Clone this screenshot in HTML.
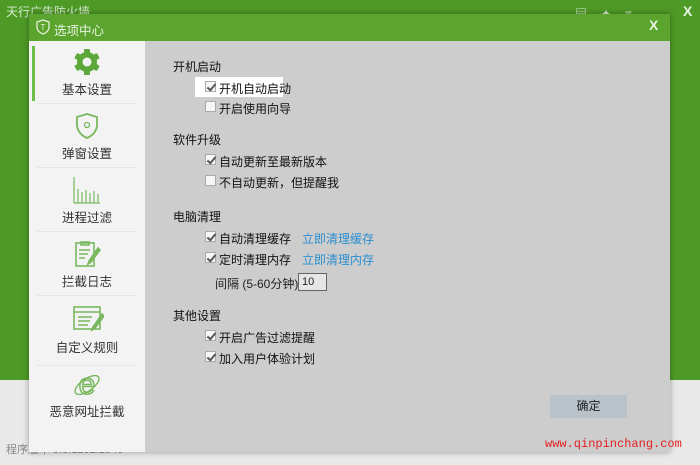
<!DOCTYPE html>
<html><head><meta charset="utf-8"><style>
*{margin:0;padding:0;box-sizing:border-box}
body{width:700px;height:465px;overflow:hidden;position:relative;background:#e9e9e9;font-family:"Liberation Sans","Noto Sans CJK SC",sans-serif;font-size:12px;color:#222}
.abs{position:absolute}
#topbg{left:0;top:0;width:700px;height:380px;background:#4e9a26}
#dlg{left:29px;top:14px;width:641px;height:438px;background:#cdcdcd;box-shadow:0 0 6px rgba(0,0,0,.35)}
#tb{left:0;top:0;width:641px;height:27px;background:#5ba42e;color:#e8f3e0}
#side{left:0;top:27px;width:116px;height:411px;background:#f3f3f3}
.item{position:absolute;left:0;width:116px;height:64px;text-align:center}
.item .lbl{position:absolute;left:0;width:116px;top:38px;font-size:12.5px;color:#333}
.item svg{position:absolute;left:43px;top:6px}
.sep{position:absolute;left:8px;width:100px;height:1px;background:#e2e8dc}
.h{position:absolute;left:173px;font-size:12px;color:#111}
.cb{position:absolute;left:205px;width:11px;height:11px;border:1px solid #aaa;background:#f6f6f6}
.cb.on::after{content:"";position:absolute;left:3px;top:0px;width:3px;height:7px;border:solid #555;border-width:0 2px 2px 0;transform:rotate(40deg)}
.t{position:absolute;left:219px;font-size:12px;color:#111}
.lnk{position:absolute;left:302px;color:#2a8fd0;font-size:12px}
</style></head><body>
<div id="topbg" class="abs"></div>
<div class="abs" style="left:6px;top:3px;color:#d5ead0;font-size:12px">天行广告防火墙</div>
<div class="abs" style="left:575px;top:5px;color:#dfeedd;font-size:12px;letter-spacing:14px">▤✦≡—</div>
<div class="abs" style="left:683px;top:3px;color:#e8f3e2;font-size:14px;font-weight:bold">X</div>
<div class="abs" style="left:6px;top:441px;color:#888;font-size:11px">程序版本 5.5.1202.1940</div>
<div id="dlg" class="abs">
 <div id="tb" class="abs">
  <svg class="abs" style="left:7px;top:5px" width="14" height="16" viewBox="0 0 14 16"><path d="M7 1L13 3V8C13 11.5 10 14 7 15C4 14 1 11.5 1 8V3Z" fill="none" stroke="#e4f0dc" stroke-width="1.3"/><text x="7" y="11" font-size="8" text-anchor="middle" fill="#e4f0dc" font-family="Liberation Sans">T</text></svg>
  <div class="abs" style="left:25px;top:6px;font-size:12.5px">选项中心</div>
  <div class="abs" style="left:620px;top:3px;font-size:14px;font-weight:bold">X</div>
 </div>
 <div id="side" class="abs">
  <div class="abs" style="left:3px;top:5px;width:3px;height:55px;background:#6cc04a"></div>
  <div class="item" style="top:0">
   <svg width="30" height="30" viewBox="0 0 30 30"><g fill="#5ca83a"><circle cx="15" cy="15" r="10"/><rect x="12" y="2" width="6" height="26" rx="1"/><rect x="12" y="2" width="6" height="26" rx="1" transform="rotate(60 15 15)"/><rect x="12" y="2" width="6" height="26" rx="1" transform="rotate(120 15 15)"/></g><circle cx="15" cy="15" r="4.5" fill="#f3f3f3"/></svg>
   <div class="lbl">基本设置</div></div>
  <div class="sep" style="top:62px"></div>
  <div class="item" style="top:64px">
   <svg width="30" height="30" viewBox="0 0 30 30"><path d="M15 3L25 6V14C25 20 20 25 15 27C10 25 5 20 5 14V6Z" fill="none" stroke="#79b85e" stroke-width="1.8"/><circle cx="15" cy="14" r="2.5" fill="none" stroke="#79b85e" stroke-width="1.3"/></svg>
   <div class="lbl">弹窗设置</div></div>
  <div class="sep" style="top:126px"></div>
  <div class="item" style="top:128px">
   <svg width="30" height="30" viewBox="0 0 30 30" stroke="#79b85e" stroke-width="1.2"><path d="M2 2V28M6 14V28M10 17V28M14 15V28M18 18V28M22 16V28M26 19V28M2 28H28"/></svg>
   <div class="lbl">进程过滤</div></div>
  <div class="sep" style="top:190px"></div>
  <div class="item" style="top:192px">
   <svg width="30" height="30" viewBox="0 0 30 30" fill="none" stroke="#79b85e" stroke-width="1.6"><rect x="4" y="4" width="18" height="23"/><path d="M9 3H17V6H9ZM7 11H18M7 15H16M7 19H13"/><path d="M26 9L17 22L16 25L19 23L28 11Z" fill="#79b85e"/></svg>
   <div class="lbl">拦截日志</div></div>
  <div class="sep" style="top:254px"></div>
  <div class="item" style="top:256px">
   <svg width="32" height="30" viewBox="0 0 32 30" fill="none" stroke="#79b85e" stroke-width="1.6"><rect x="2" y="4" width="26" height="22"/><path d="M2 9H28M6 14H20M6 18H18M6 22H16"/><path d="M30 11L21 24L20 27L23 25L32 13Z" fill="#79b85e"/></svg>
   <div class="lbl" style="top:40px">自定义规则</div></div>
  <div class="sep" style="top:324px"></div>
  <div class="item" style="top:320px">
   <svg width="32" height="34" viewBox="0 0 32 34" style="left:42px;top:6px"><text x="16" y="27" font-size="30" text-anchor="middle" fill="none" stroke="#79b85e" stroke-width="1.5" font-family="Liberation Sans">e</text><ellipse cx="16" cy="18" rx="14" ry="6" transform="rotate(-35 16 18)" fill="none" stroke="#79b85e" stroke-width="1.4"/></svg>
   <div class="lbl" style="top:40px">恶意网址拦截</div></div>
 </div>
</div>
<div class="h" style="top:58px">开机启动</div>
<div class="abs" style="left:195px;top:77px;width:88px;height:20px;background:#fff"></div>
<div class="cb on" style="top:81px"></div><div class="t" style="top:80px">开机自动启动</div>
<div class="cb" style="top:101px"></div><div class="t" style="top:100px">开启使用向导</div>
<div class="h" style="top:131px">软件升级</div>
<div class="cb on" style="top:154px"></div><div class="t" style="top:153px">自动更新至最新版本</div>
<div class="cb" style="top:175px"></div><div class="t" style="top:174px">不自动更新，但提醒我</div>
<div class="h" style="top:208px">电脑清理</div>
<div class="cb on" style="top:231px"></div><div class="t" style="top:230px">自动清理缓存</div><div class="lnk" style="top:230px">立即清理缓存</div>
<div class="cb on" style="top:252px"></div><div class="t" style="top:251px">定时清理内存</div><div class="lnk" style="top:251px">立即清理内存</div>
<div class="abs" style="left:215px;top:275px;font-size:12px">间隔 (5-60分钟)</div>
<div class="abs" style="left:298px;top:273px;width:29px;height:18px;border:1px solid #666;background:#e6e6e6;padding:2px 3px;font-size:11px">10</div>
<div class="h" style="top:307px">其他设置</div>
<div class="cb on" style="top:330px"></div><div class="t" style="top:329px">开启广告过滤提醒</div>
<div class="cb on" style="top:351px"></div><div class="t" style="top:350px">加入用户体验计划</div>
<div class="abs" style="left:550px;top:395px;width:77px;height:23px;background:#b9c3c9;text-align:center;line-height:23px">确定</div>
<div class="abs" style="left:545px;top:437px;color:#e02020;font-family:'Liberation Mono',monospace;font-size:12px">www.qinpinchang.com</div>
</body></html>
